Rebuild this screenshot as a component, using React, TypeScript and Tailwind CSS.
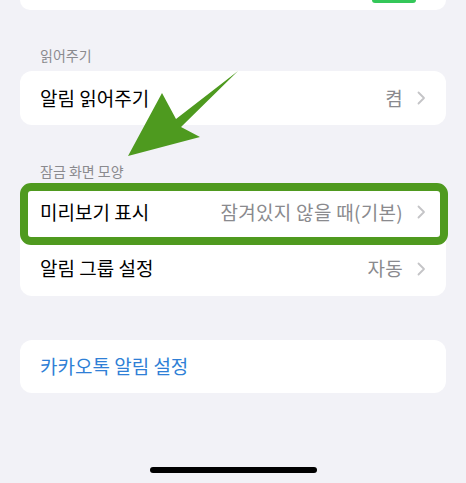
const font = { fontFamily: '"Noto Sans CJK KR", "Noto Sans", sans-serif' };

function Chevron() {
  return (
    <svg width="9" height="14" viewBox="0 0 9 14" className="ml-[14px] shrink-0">
      <path d="M1.5 1.5 L7 7 L1.5 12.5" fill="none" stroke="#c4c4c7" strokeWidth="1.8" strokeLinecap="round" strokeLinejoin="round" />
    </svg>
  );
}

function Row({ label, value, className = "" }: { label: string; value?: string; className?: string }) {
  return (
    <div className={`flex items-center justify-between pl-5 pr-5 ${className}`}>
      <span className="text-[19px] text-black">{label}</span>
      {value ? (
        <div className="flex items-center">
          <span className="text-[19px] tracking-[0.3px] text-[#8a8a8e]">{value}</span>
          <Chevron />
        </div>
      ) : null}
    </div>
  );
}

export default function App() {
  return (
    <div className="relative h-[483px] w-[466px] overflow-hidden bg-[#f2f2f7]" style={font}>
      <div className="px-5">
        {/* bottom of the card above */}
        <div className="flex h-[10px] items-start justify-end rounded-b-xl bg-white pr-[30px]">
          <div className="h-[3px] w-[44px] rounded-b-full bg-[#34c759]" />
        </div>

        <p className="mt-[36px] pl-5 text-[14px] leading-[18px] text-[#8a8a8e]">읽어주기</p>
        <div className="mt-[7px] rounded-xl bg-white">
          <Row label="알림 읽어주기" value="켬" className="h-[54px]" />
        </div>

        <p className="mt-[37px] pl-5 text-[14px] leading-[18px] text-[#8a8a8e]">잠금 화면 모양</p>
        <div className="relative mt-[3px] rounded-xl bg-white">
          <Row label="미리보기 표시" value="잠겨있지 않을 때(기본)" className="h-[58px]" />
          <Row label="알림 그룹 설정" value="자동" className="h-[55px]" />
          <div className="absolute left-0 top-0 h-[62px] w-[428px] rounded-[11px] border-[8px] border-[#4f9a1f]" />
        </div>

        <div className="mt-[44px] rounded-xl bg-white">
          <div className="flex h-[53px] items-center pl-5">
            <span className="text-[19px] text-[#2f7fd6]">카카오톡 알림 설정</span>
          </div>
        </div>
      </div>

      {/* annotation arrow */}
      <svg className="absolute left-0 top-0" width="466" height="483" viewBox="0 0 466 483">
        <polygon points="238,71 176,119 162,93 128,156 200,137 181,127" fill="#4e9a1f" />
      </svg>

      <div className="absolute left-[150px] top-[467px] h-[6px] w-[167px] rounded-full bg-black" />
    </div>
  );
}
